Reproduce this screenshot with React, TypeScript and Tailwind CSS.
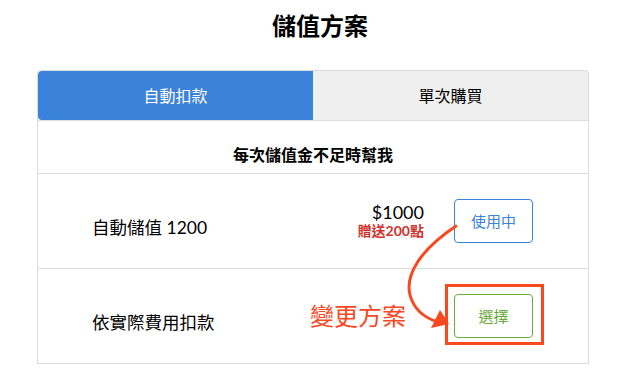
export default function App() {
  const font = { fontFamily: 'Lato, "Noto Sans CJK TC", sans-serif' };

  return (
    <div className="relative w-[640px] h-[378px] bg-white text-[#222]" style={font}>
      {/* Title */}
      <div className="pt-[12px] text-center text-[24px] leading-[28px] font-semibold text-black">
        儲值方案
      </div>

      <div className="ml-[37px] mt-[30px] w-[552px]">
        {/* Tabs */}
        <div className="flex h-[50px] rounded-t-[4px] border border-b-0 border-[#dcdcdc] overflow-hidden">
          <div className="flex-1 flex items-center justify-center bg-[#3b83da] text-white text-[16px] rounded-l-[4px]">
            自動扣款
          </div>
          <div className="flex-1 flex items-center justify-center bg-[#efefef] text-black text-[16px]">
            單次購買
          </div>
        </div>

        {/* Card */}
        <div className="border-x border-b border-[#dcdcdc] bg-white">
          <div className="pt-[24px] pb-[8px] text-center text-[16px] leading-[20px] font-semibold text-black border-b border-t border-[#dcdcdc]">
            每次儲值金不足時幫我
          </div>

          <div className="flex items-center h-[95px] pl-[54px] pr-[55px] border-b border-[#dcdcdc]">
            <div className="flex-1 pt-[14px] text-[17.5px] text-black">自動儲值 1200</div>
            <div className="mr-[30px] text-right">
              <div className="text-[18px] leading-[20px] text-black">$1000</div>
              <div className="text-[14px] leading-[18px] font-bold text-[#d0312d]">贈送200點</div>
            </div>
            <button className="w-[79px] h-[44px] rounded-[4px] border border-[#3b83da] text-[#3b83da] text-[15px]">
              使用中
            </button>
          </div>

          <div className="flex items-center h-[94px] pl-[54px] pr-[55px]">
            <div className="flex-1 pt-[14px] text-[17.5px] text-black">依實際費用扣款</div>
            <div className="mr-[48px] text-[24px] leading-[28px] text-[#f8481f]">變更方案</div>
            <div className="relative">
              <div className="absolute left-[-9px] right-[-11px] top-[-10px] bottom-[-7px] border-[3px] border-[#f8481f]" />
              <button className="w-[79px] h-[44px] rounded-[4px] border border-[#6cae3e] text-[#6aa93a] text-[15px]">
                選擇
              </button>
            </div>
          </div>
        </div>
      </div>

      {/* Arrow annotation */}
      <svg className="absolute left-0 top-0 pointer-events-none" width="640" height="378" viewBox="0 0 640 378">
        <path
          d="M456,226 C420,250 405,275 410,295 C414,310 425,318 438,322"
          fill="none"
          stroke="#f8481f"
          strokeWidth="3"
          strokeLinecap="round"
        />
        <polygon points="449,324 431,328 440,310" fill="#f8481f" />
      </svg>
    </div>
  );
}
